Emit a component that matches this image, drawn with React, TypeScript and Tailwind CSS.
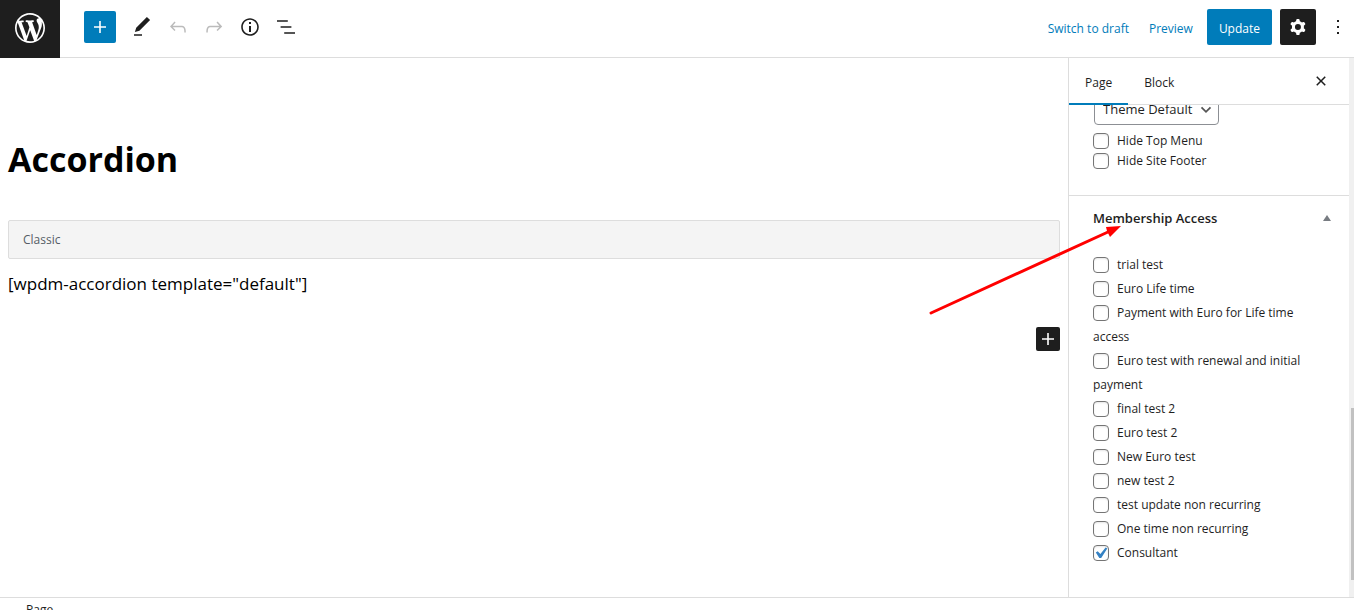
import clsx from "clsx";
import { ReactNode, useState } from "react";

const icons = {
  plus: "M18 11.2h-5.2V6h-1.6v5.2H6v1.6h5.2V18h1.6v-5.2H18z",
  pencil:
    "M20.1 5.1L16.9 2 6.2 12.7l-1.3 4.4 4.5-1.3L20.1 5.1zM4 20.8h8v-1.5H4v1.5z",
  undo: "M18.3 11.7c-.6-.6-1.4-.9-2.3-.9H6.7l2.9-3.3-1.1-1-4.5 5L8.5 16l1-1-2.7-2.7H16c.5 0 .9.2 1.3.5 1 1 1 3.4 1 4.5v.3h1.5v-.2c0-1.5 0-4.3-1.5-5.7z",
  redo: "M15.6 6.5l-1.1 1 2.9 3.3H8c-.9 0-1.7.3-2.3.9-1.4 1.5-1.4 4.2-1.4 5.6v.2h1.5v-.3c0-1.1 0-3.5 1-4.5.3-.3.7-.5 1.3-.5h9.2L14.5 15l1.1 1.1 4.6-4.6-4.6-5z",
  info: "M12 3.2c-4.8 0-8.8 3.9-8.8 8.8 0 4.8 3.9 8.8 8.8 8.8 4.8 0 8.8-3.9 8.8-8.8 0-4.8-4-8.8-8.8-8.8zm0 16c-4 0-7.2-3.3-7.2-7.2C4.8 8 8 4.8 12 4.8s7.2 3.3 7.2 7.2c0 4-3.2 7.2-7.2 7.2zM11 17h2v-6h-2v6zm0-8h2V7h-2v2z",
  listView:
    "M13.8 5.2H3v1.5h10.8V5.2zm-3.6 12v1.5H21v-1.5H10.2zm7.2-6H6.6v1.5h10.8v-1.5z",
  cog: "M10.289 4.836A1 1 0 0111.275 4h1.306a1 1 0 01.987.836l.244 1.466c.787.26 1.503.679 2.108 1.218l1.393-.522a1 1 0 011.216.437l.653 1.13a1 1 0 01-.23 1.273l-1.148.944a6.025 6.025 0 010 2.435l1.149.946a1 1 0 01.23 1.272l-.653 1.13a1 1 0 01-1.216.437l-1.394-.522c-.605.54-1.32.958-2.108 1.218l-.244 1.466a1 1 0 01-.987.836h-1.306a1 1 0 01-.986-.836l-.244-1.466a5.995 5.995 0 01-2.108-1.218l-1.394.522a1 1 0 01-1.217-.436l-.653-1.131a1 1 0 01.23-1.272l1.149-.946a6.026 6.026 0 010-2.435l-1.148-.944a1 1 0 01-.23-1.272l.653-1.131a1 1 0 011.217-.437l1.393.522a5.994 5.994 0 012.108-1.218l.244-1.466zM14.929 12a3 3 0 11-6 0 3 3 0 016 0z",
  more: "M13 19h-2v-2h2v2zm0-6h-2v-2h2v2zm0-6h-2V5h2v2z",
  close:
    "M12 13.06l3.712 3.713 1.061-1.06L13.061 12l3.712-3.712-1.06-1.06L12 10.938 8.288 7.227l-1.061 1.06L10.939 12l-3.712 3.712 1.06 1.061L12 13.061z",
};

const membershipLevels = [
  "trial test",
  "Euro Life time",
  "Payment with Euro for Life time access",
  "Euro test with renewal and initial payment",
  "final test 2",
  "Euro test 2",
  "New Euro test",
  "new test 2",
  "test update non recurring",
  "One time non recurring",
  "Consultant",
];

interface IconProps {
  name: keyof typeof icons;
  className?: string;
}

function Icon({ name, className }: IconProps) {
  return (
    <svg
      viewBox="0 0 24 24"
      fill="currentColor"
      fillRule="evenodd"
      aria-hidden="true"
      className={clsx("size-6 shrink-0", className)}
    >
      <path d={icons[name]} />
    </svg>
  );
}

interface ToolButtonProps {
  label: string;
  icon: keyof typeof icons;
  disabled?: boolean;
}

function ToolButton({ label, icon, disabled }: ToolButtonProps) {
  return (
    <button
      type="button"
      aria-label={label}
      disabled={disabled}
      className="flex size-9 items-center justify-center disabled:text-[#bbb]"
    >
      <Icon name={icon} />
    </button>
  );
}

interface CheckFieldProps {
  children: ReactNode;
  className?: string;
  defaultChecked?: boolean;
}

function CheckField({ children, className, defaultChecked }: CheckFieldProps) {
  const [checked, setChecked] = useState(Boolean(defaultChecked));

  return (
    <label className={clsx("block", className)}>
      <span className="relative mr-2 mb-0.5 inline-block size-4 align-middle">
        <input
          type="checkbox"
          checked={checked}
          onChange={(event) => setChecked(event.target.checked)}
          className="block size-4 appearance-none rounded-sm border border-[#757575] bg-white shadow-[inset_0_1px_2px_rgba(0,0,0,0.1)]"
        />
        {checked && (
          <svg
            viewBox="0 0 20 20"
            fill="#3582c4"
            aria-hidden="true"
            className="pointer-events-none absolute -inset-0.5 size-5"
          >
            <path d="M14.6 4.4l1.7 1-6.1 9.6H8.3L4.8 9.6l1.9-1.3 2.7 2.6z" />
          </svg>
        )}
      </span>
      {children}
    </label>
  );
}

function Header() {
  return (
    <header className="flex shrink-0 border-b border-[#ddd]">
      <a
        href="#"
        aria-label="View pages"
        className="-mb-px flex h-[58px] w-[60px] items-center justify-center bg-[#1e1e1e] pb-0.5 text-white"
      >
        <svg
          viewBox="-2 -2 24 24"
          fill="currentColor"
          aria-hidden="true"
          className="size-9"
        >
          <path d="M20 10c0-5.51-4.49-10-10-10C4.48 0 0 4.49 0 10c0 5.52 4.48 10 10 10 5.51 0 10-4.48 10-10zM7.78 15.37L4.37 6.22c.55-.02 1.17-.08 1.17-.08.5-.06.44-1.13-.06-1.11 0 0-1.45.11-2.37.11-.18 0-.37 0-.58-.01C4.12 2.69 6.87 1.11 10 1.11c2.33 0 4.45.87 6.05 2.34-.68-.11-1.65.39-1.65 1.58 0 .74.45 1.36.9 2.1.35.61.55 1.36.55 2.46 0 1.49-1.4 5-1.4 5l-3.03-8.37c.54-.02.82-.17.82-.17.5-.05.44-1.25-.06-1.22 0 0-1.44.12-2.38.12-.87 0-2.33-.12-2.33-.12-.5-.03-.56 1.2-.06 1.22l.92.08 1.26 3.41zM17.41 10c.24-.64.74-1.87.43-4.25.7 1.29 1.05 2.71 1.05 4.25 0 3.29-1.73 6.24-4.4 7.78.97-2.59 1.94-5.2 2.92-7.78zM6.1 18.09C3.12 16.65 1.11 13.53 1.11 10c0-1.3.23-2.48.72-3.59C3.25 10.3 4.67 14.2 6.1 18.09zm4.03-6.63l2.58 6.98c-.86.29-1.76.45-2.71.45-.79 0-1.57-.11-2.29-.33.81-2.38 1.62-4.74 2.42-7.1z" />
        </svg>
      </a>
      <div className="flex flex-1 items-center justify-between pr-1 pb-[3px] pl-6">
        <div className="flex items-center">
          <button
            type="button"
            aria-label="Add block"
            className="mr-2 flex size-8 items-center justify-center rounded-xs bg-[#007cba] text-white"
          >
            <Icon name="plus" />
          </button>
          <ToolButton label="Tools" icon="pencil" />
          <ToolButton label="Undo" icon="undo" disabled />
          <ToolButton label="Redo" icon="redo" disabled />
          <ToolButton label="Details" icon="info" />
          <ToolButton label="List view" icon="listView" />
        </div>
        <div className="flex items-center">
          <button type="button" className="mr-5 pt-1 text-[#007cba]">
            Switch to draft
          </button>
          <button type="button" className="mr-3.5 pt-1 text-[#007cba]">
            Preview
          </button>
          <button
            type="button"
            className="mr-2 h-9 rounded-xs bg-[#007cba] px-3 pt-1 text-white"
          >
            Update
          </button>
          <button
            type="button"
            aria-label="Settings"
            className="mr-2.5 flex size-9 items-center justify-center rounded-xs bg-[#1e1e1e] text-white"
          >
            <Icon name="cog" />
          </button>
          <button type="button" aria-label="Options">
            <Icon name="more" />
          </button>
        </div>
      </div>
    </header>
  );
}

function Editor() {
  return (
    <section className="min-w-0 flex-1 px-2 pt-[75px] text-black">
      <h1 className="text-[34px] leading-[52px] font-bold">Accordion</h1>
      <div className="mt-[35px] rounded-xs border border-[#ddd] bg-[#f4f4f4] px-3.5 py-2 leading-[21px] text-[#555d66]">
        Classic
      </div>
      <p className="mt-2.5 text-[17px] leading-[30px]">
        [wpdm-accordion template="default"]
      </p>
      <div className="mt-7 flex justify-end">
        <button
          type="button"
          aria-label="Add block"
          className="flex size-6 items-center justify-center rounded-xs bg-[#1e1e1e] text-white"
        >
          <Icon name="plus" />
        </button>
      </div>
    </section>
  );
}

function Sidebar() {
  return (
    <aside className="flex w-[281px] shrink-0 flex-col border-l border-[#ddd]">
      <div className="flex h-[47px] shrink-0 items-stretch border-b border-[#ddd]">
        <button
          type="button"
          className="-mb-px border-b-2 border-[#007cba] px-4 pt-1"
        >
          Page
        </button>
        <button
          type="button"
          className="-mb-px border-b-2 border-transparent px-4 pt-1"
        >
          Block
        </button>
        <button
          type="button"
          aria-label="Close settings"
          className="mr-4 ml-auto"
        >
          <Icon name="close" />
        </button>
      </div>
      <div className="min-h-0 flex-1 overflow-hidden">
        <div className="flow-root border-b border-[#ddd] px-6 pb-6">
          <div className="relative -mt-2.5 mb-1.5 ml-px w-fit">
            <select
              aria-label="Page template"
              className="block h-[30px] w-[125px] appearance-none rounded-sm border border-[#8c8f94] bg-white pr-6 pl-2 text-[13px]"
            >
              <option>Theme Default</option>
            </select>
            <svg
              viewBox="0 0 20 20"
              fill="none"
              stroke="#555"
              strokeWidth="2"
              aria-hidden="true"
              className="pointer-events-none absolute top-1.5 right-1 size-[18px]"
            >
              <path d="M5 7l5 5 5-5" />
            </svg>
          </div>
          <CheckField className="leading-5">Hide Top Menu</CheckField>
          <CheckField className="leading-5">Hide Site Footer</CheckField>
        </div>
        <div className="px-6">
          <h2 className="flex h-[45px] items-center justify-between text-[13px] font-semibold">
            Membership Access
            <button
              type="button"
              aria-label="Toggle panel: Membership Access"
              className="-mr-1.5 pb-0.5"
            >
              <svg
                viewBox="0 0 8 6"
                fill="#787c82"
                aria-hidden="true"
                className="h-1.5 w-2"
              >
                <path d="M4 0l4 6H0z" />
              </svg>
            </button>
          </h2>
          <div className="pt-3 leading-6">
            {membershipLevels.map((level) => (
              <CheckField key={level} defaultChecked={level === "Consultant"}>
                {level}
              </CheckField>
            ))}
          </div>
        </div>
      </div>
    </aside>
  );
}

function App() {
  return (
    <div className="flex h-screen flex-col overflow-hidden bg-white font-['Open_Sans','Noto_Sans',sans-serif] text-xs text-[#1e1e1e]">
      <Header />
      <main className="relative flex min-h-0 flex-1">
        <Editor />
        <Sidebar />
        <div className="flex w-[5px] shrink-0 flex-col justify-end bg-[#f0f0f0] pb-[17px] pl-0.5">
          <div className="h-[172px] bg-[#c1c1c1]" />
        </div>
        <svg
          viewBox="0 0 194 92"
          aria-hidden="true"
          className="pointer-events-none absolute top-[166px] right-[232px] h-[92px] w-[194px]"
        >
          <path
            d="M3 89L180 8"
            stroke="#f00"
            strokeWidth="3"
            strokeLinecap="round"
          />
          <path d="M193 2l-15 1 1 4 3 6z" fill="#f00" />
        </svg>
      </main>
      <footer className="h-[13px] shrink-0 overflow-hidden border-t border-[#ddd] px-[26px] pt-1">
        Page
      </footer>
    </div>
  );
}

export default App;
